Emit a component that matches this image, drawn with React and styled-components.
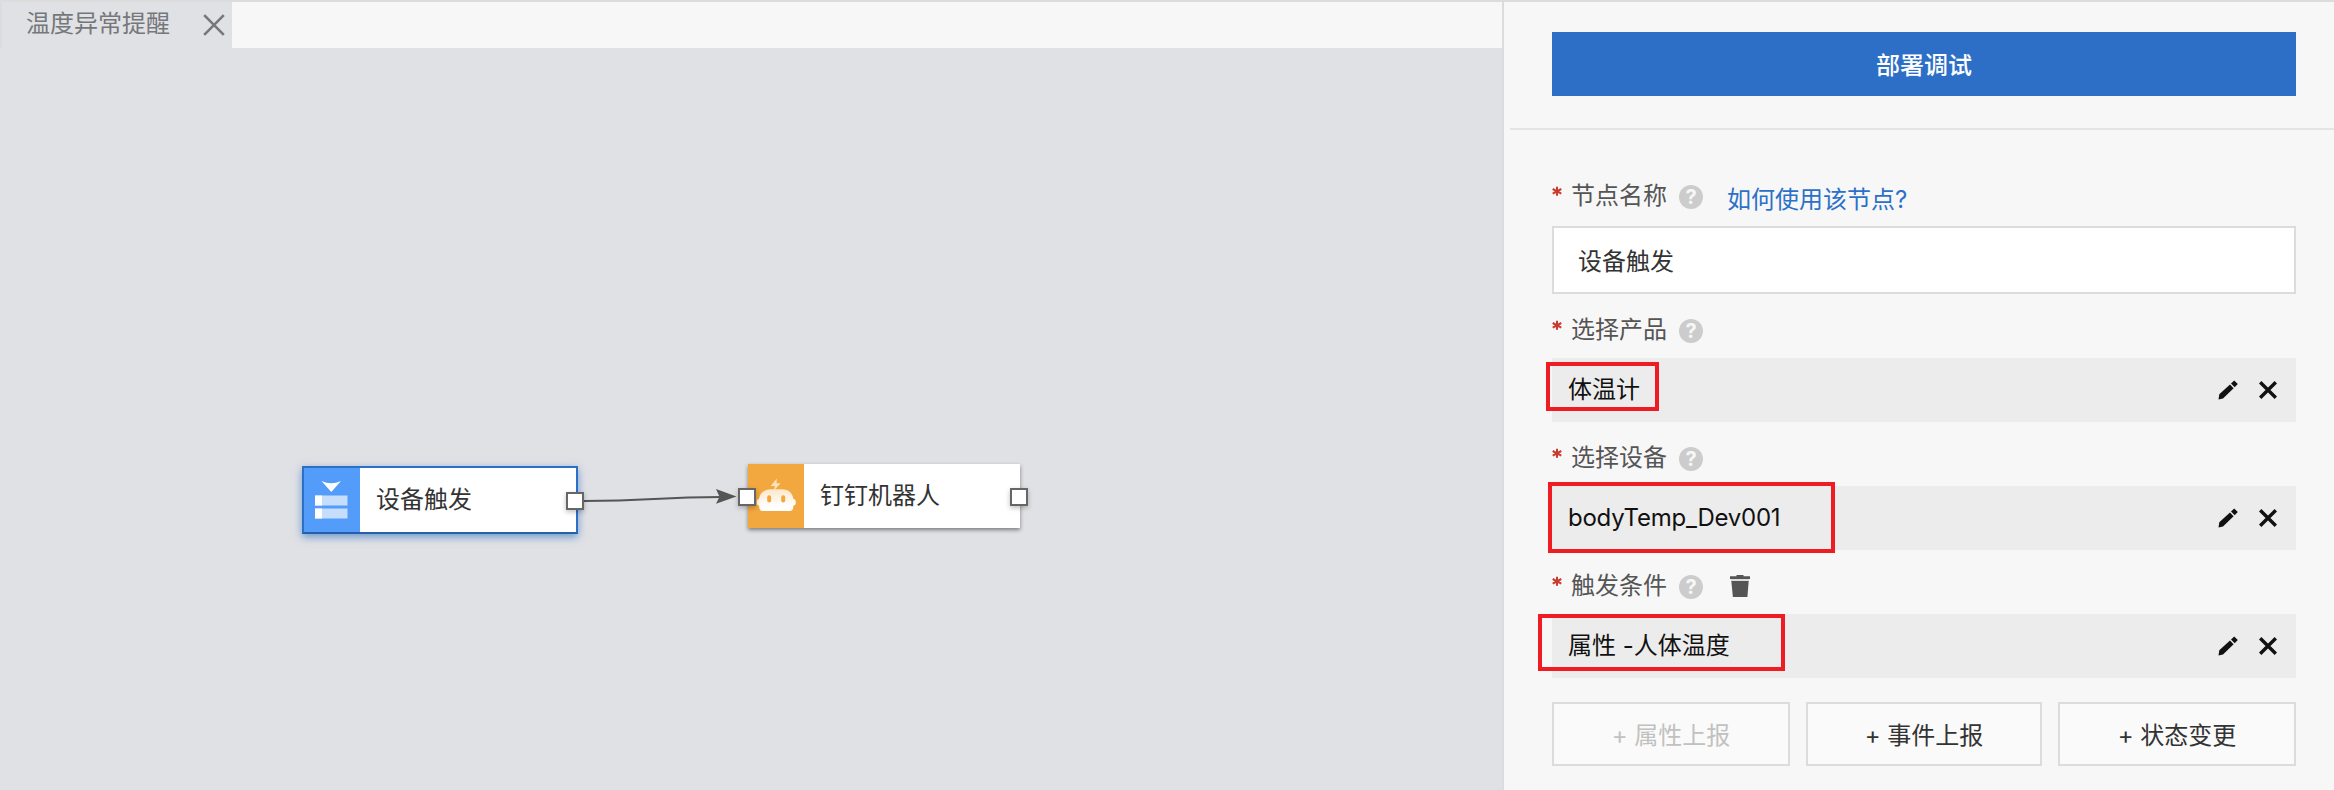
import React from 'react';
import styled, { createGlobalStyle } from 'styled-components';

const GlobalStyle = createGlobalStyle`
  * { box-sizing: border-box; }
  body { margin: 0; background: #f7f7f7; }
`;

const Page = styled.div`
  display: flex;
  width: 2334px;
  height: 790px;
  overflow: hidden;
  border-top: 2px solid #dcdcdc;
  background: #f7f7f7;
  font-family: Inter, 'Noto Sans CJK SC', sans-serif;
  font-size: 24px;
  line-height: 36px;
  color: #333;
`;

const Editor = styled.main`
  display: flex;
  flex-direction: column;
  width: 1504px;
  border-right: 2px solid #dcdcdc;
`;

const TabBar = styled.div`
  display: flex;
  height: 46px;
  flex: none;
`;

const Tab = styled.div`
  display: flex;
  align-items: center;
  justify-content: space-between;
  width: 232px;
  padding: 0 7px 3px 24px;
  border-left: 2px solid #dcdcdc;
  background: #e0e1e5;
  color: #75777a;

  svg { margin-top: 3px; }
`;

const Canvas = styled.div`
  position: relative;
  flex: 1;
  background: #e0e1e5;
`;

const Edge = styled.svg`
  position: absolute;
  left: 584px;
  top: 432px;
`;

const Node = styled.div`
  position: absolute;
  left: ${(p) => p.$x}px;
  top: ${(p) => p.$y}px;
  display: flex;
  width: ${(p) => (p.$selected ? 276 : 272)}px;
  height: ${(p) => (p.$selected ? 68 : 64)}px;
  background: #fff;
  border: ${(p) => (p.$selected ? '2px solid #2c6fc7' : 'none')};
  border-bottom-color: #2560a8;
  box-shadow: ${(p) =>
    p.$selected ? '0 3px 8px rgba(30, 104, 190, 0.6)' : '0 2px 4px rgba(0, 0, 0, 0.45)'};
`;

const NodeIcon = styled.div`
  width: 56px;
  height: 64px;
  background: ${(p) => p.$color};

  svg { display: block; }
`;

const NodeTitle = styled.div`
  padding: 14px 0 0 16px;
`;

const Port = styled.span`
  position: absolute;
  left: ${(p) => p.$x}px;
  top: ${(p) => p.$y}px;
  width: 18px;
  height: 18px;
  border: 2px solid #666;
  background: #fff;
  box-shadow: 0 2px 5px rgba(0, 0, 0, 0.25);
`;

const Panel = styled.aside`
  flex: 1;
  display: flex;
  flex-direction: column;
`;

const PanelHeader = styled.div`
  height: 128px;
  margin-left: 6px;
  padding: 30px 38px 0 42px;
  border-bottom: 2px solid #e5e5e5;
`;

const DeployButton = styled.button`
  display: block;
  width: 100%;
  height: 64px;
  padding: 3px 0 0;
  border: 0;
  background: #2d6fc6;
  color: #fff;
  font: inherit;
  font-weight: 500;
`;

const Form = styled.div`
  padding: 30px 38px 0 48px;
`;

const FieldHeader = styled.div`
  display: flex;
  align-items: flex-start;
  height: ${(p) => (p.$tall ? 66 : 64)}px;
  padding-top: 18px;
  color: #555;
`;

const Required = styled.span`
  display: block;
  width: 10px;
  height: 36px;
  padding-top: 7px;
  margin-right: 9px;

  svg { display: block; }
`;

const HelpMark = styled.span`
  display: flex;
  align-items: center;
  justify-content: center;
  width: 24px;
  height: 24px;
  margin: 7px 0 0 12px;
  border-radius: 50%;
  background: #ccc;
  color: #f7f7f7;
  font-size: 20px;
  font-weight: 700;
  line-height: 24px;
`;

const HelpLink = styled.a`
  margin: 4px 0 0 24px;
  color: #2c70c9;
`;

const TrashSlot = styled.span`
  margin: 7px 0 0 27px;
  svg { display: block; }
`;

const TextInput = styled.div`
  height: 68px;
  padding: 16px 24px 0;
  border: 2px solid #dcdcdc;
  background: #fff;
`;

const ValueRow = styled.div`
  position: relative;
  display: flex;
  align-items: center;
  height: 64px;
  padding: 0 19px 0 16px;
  background: #ececec;
  color: #111;
`;

const Value = styled.span`
  flex: 1;
  letter-spacing: ${(p) => p.$spacing || 'normal'};
`;

const RowActions = styled.span`
  display: flex;
  gap: 21px;
`;

const Highlight = styled.span`
  position: absolute;
  left: ${(p) => p.$x}px;
  top: ${(p) => p.$y}px;
  width: ${(p) => p.$w}px;
  height: ${(p) => p.$h}px;
  border: 4px solid #ef1c24;
  pointer-events: none;
`;

const ButtonRow = styled.div`
  display: grid;
  grid-template-columns: 238px 1fr 238px;
  gap: 16px;
  margin-top: 24px;
`;

const AddButton = styled.button`
  height: 64px;
  padding: 3px 0 0;
  border: 2px solid #dcdcdc;
  background: #fafafa;
  color: ${(p) => (p.disabled ? '#c1c1c1' : '#333')};
  font: inherit;
`;

const TabClose = () => (
  <svg width="22" height="22" viewBox="0 0 22 22" fill="none" stroke="#75777a" strokeWidth="2.6">
    <path d="M1.2 1.2 20.8 20.8M20.8 1.2 1.2 20.8" />
  </svg>
);

const Asterisk = () => (
  <svg width="10" height="12" viewBox="0 0 10 12" stroke="#cc3a2d" strokeWidth="2">
    <path d="M5 1.8V10.8M.7 4 9.3 8.6M9.3 4 .7 8.6" />
  </svg>
);

const Pencil = () => (
  <svg width="20" height="20" viewBox="0 0 20 20" fill="#111">
    <path d="M.5 19.5 1.3 14.2 12 4.4 15.6 8.2 5 18.6ZM13 3.5 16.2.6 19.8 4.1 16.7 7.3Z" />
  </svg>
);

const Cross = () => (
  <svg width="18" height="20" viewBox="0 0 18 20" stroke="#111" strokeWidth="3.4">
    <path d="M1.2 2.2 16.8 17.8M16.8 2.2 1.2 17.8" />
  </svg>
);

const Trash = () => (
  <svg width="20" height="22" viewBox="0 0 20 22" fill="#555">
    <path d="M0 1.2H6.5V0H13.5V1.2H20V4H0ZM1.3 6H18.7L17.4 22H2.9Z" />
    <path fill="#aaa" d="M1 4H19V6H1Z" opacity=".35" />
  </svg>
);

const DeviceIcon = () => (
  <svg width="56" height="64" viewBox="0 0 56 64">
    <path fill="#fff" d="M17.5 13Q27 17.5 37 13L27.3 24Z" />
    <path fill="#c4defc" d="M11 27.5H43.5V37.5H11ZM11 40.5H43.5V50.5H11Z" />
    <path fill="#fff" d="M11 27.5H18V37.5H11ZM11 40.5H18V50.5H11Z" />
  </svg>
);

const RobotIcon = () => (
  <svg width="56" height="64" viewBox="0 0 56 64">
    <defs>
      <linearGradient id="robot" x1="0" y1="25" x2="0" y2="42" gradientUnits="userSpaceOnUse">
        <stop offset="0" stopColor="#fff" stopOpacity=".72" />
        <stop offset="1" stopColor="#fff" />
      </linearGradient>
    </defs>
    <path fill="#fbe0b8" d="M28.8 14.6 22.6 22H26.8L26 26.4 32.6 19.2H28.6Z" />
    <path
      fill="url(#robot)"
      fillRule="evenodd"
      d="M23 25.2C16 25.2 12 29 11 35Q8.800 35 8.800 38.200Q8.800 41.500 11 41.500L11.500 44.500Q12 47 14.500 47H41.500Q44.500 47 45 44.500L45.500 41.500Q47.800 41.500 47.800 38.200Q47.800 35 45.500 35C44.500 29 40.500 25.200 34 25.200ZM21.200 31.300Q23.200 31.300 23.200 33.200V36.500Q23.200 38.500 21.200 38.500Q19.200 38.500 19.200 36.500V33.200Q19.200 31.300 21.200 31.300ZM35.200 31.300Q37.200 31.300 37.200 33.200V36.500Q37.200 38.500 35.200 38.500Q33.200 38.500 33.200 36.500V33.200Q33.200 31.300 35.200 31.300Z"
    />
  </svg>
);

function FieldLabel({ text, tall, children }) {
  return (
    <FieldHeader $tall={tall}>
      <Required><Asterisk /></Required>
      <span>{text}</span>
      <HelpMark>?</HelpMark>
      {children}
    </FieldHeader>
  );
}

function PickedValue({ text, spacing, box }) {
  const [x, y, w, h] = box;
  return (
    <ValueRow>
      <Value $spacing={spacing}>{text}</Value>
      <RowActions>
        <Pencil />
        <Cross />
      </RowActions>
      <Highlight $x={x} $y={y} $w={w} $h={h} />
    </ValueRow>
  );
}

export default function App() {
  return (
    <>
      <GlobalStyle />
      <Page>
        <Editor>
          <TabBar>
            <Tab>
              <span>温度异常提醒</span>
              <TabClose />
            </Tab>
          </TabBar>
          <Canvas>
            <Node $selected $x={302} $y={418}>
              <NodeIcon $color="#549cfa"><DeviceIcon /></NodeIcon>
              <NodeTitle>设备触发</NodeTitle>
            </Node>
            <Node $x={748} $y={416}>
              <NodeIcon $color="#f2a83e"><RobotIcon /></NodeIcon>
              <NodeTitle>钉钉机器人</NodeTitle>
            </Node>
            <Edge width="154" height="40" viewBox="0 0 154 40">
              <path d="M0 21C70 21 70 17 138 17" fill="none" stroke="#555" strokeWidth="2" />
              <path d="M132 9 152.5 16.5 132 23.8 135.500 16.8Z" fill="#555" />
            </Edge>
            <Port $x={566} $y={444} />
            <Port $x={738} $y={440} />
            <Port $x={1010} $y={440} />
          </Canvas>
        </Editor>
        <Panel>
          <PanelHeader>
            <DeployButton>部署调试</DeployButton>
          </PanelHeader>
          <Form>
            <FieldLabel text="节点名称" tall>
              <HelpLink>如何使用该节点?</HelpLink>
            </FieldLabel>
            <TextInput>设备触发</TextInput>
            <FieldLabel text="选择产品" />
            <PickedValue text="体温计" box={[-6, 4, 113, 49]} />
            <FieldLabel text="选择设备" />
            <PickedValue text="bodyTemp_Dev001" spacing="-0.25px" box={[-4, -4, 287, 71]} />
            <FieldLabel text="触发条件">
              <TrashSlot><Trash /></TrashSlot>
            </FieldLabel>
            <PickedValue text="属性 -人体温度" box={[-14, 0, 247, 57]} />
            <ButtonRow>
              <AddButton disabled>+ 属性上报</AddButton>
              <AddButton>+ 事件上报</AddButton>
              <AddButton>+ 状态变更</AddButton>
            </ButtonRow>
          </Form>
        </Panel>
      </Page>
    </>
  );
}
